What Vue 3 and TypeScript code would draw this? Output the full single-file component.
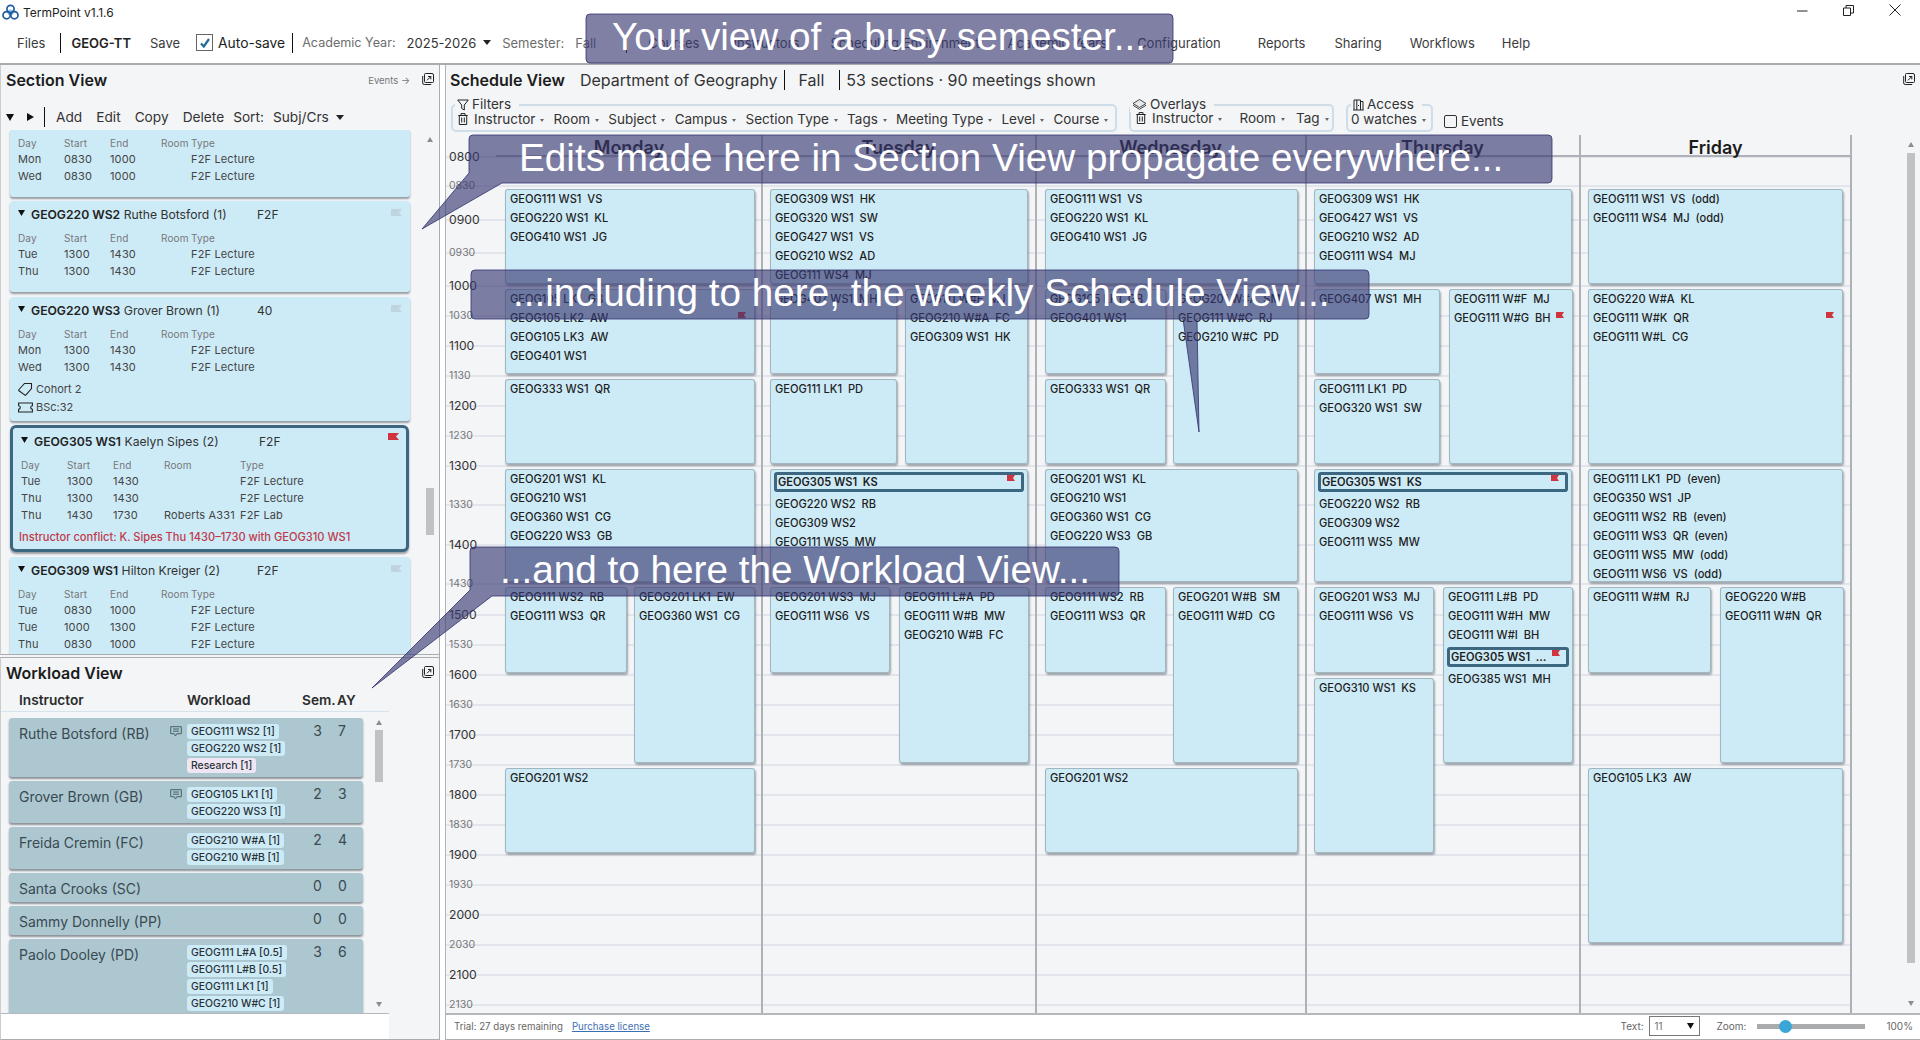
<script setup lang="ts">
interface Mtg { d: string; s: string; e: string; room?: string; t: string }
interface Sec {
  code: string; name: string; mode: string; mtgs: Mtg[]; sel?: boolean; tags?: boolean; conflict?: string; first?: boolean
}
const F = 'F2F Lecture'
const sections: Sec[] = [
  { code: 'GEOG220 WS1', name: '', mode: '', first: true, mtgs: [
    { d: 'Mon', s: '0830', e: '1000', t: F }, { d: 'Wed', s: '0830', e: '1000', t: F }] },
  { code: 'GEOG220 WS2', name: 'Ruthe Botsford (1)', mode: 'F2F', mtgs: [
    { d: 'Tue', s: '1300', e: '1430', t: F }, { d: 'Thu', s: '1300', e: '1430', t: F }] },
  { code: 'GEOG220 WS3', name: 'Grover Brown (1)', mode: '40', tags: true, mtgs: [
    { d: 'Mon', s: '1300', e: '1430', t: F }, { d: 'Wed', s: '1300', e: '1430', t: F }] },
  { code: 'GEOG305 WS1', name: 'Kaelyn Sipes (2)', mode: 'F2F', sel: true,
    conflict: 'Instructor conflict: K. Sipes Thu 1430–1730 with GEOG310 WS1', mtgs: [
      { d: 'Tue', s: '1300', e: '1430', t: F }, { d: 'Thu', s: '1300', e: '1430', t: F },
      { d: 'Thu', s: '1430', e: '1730', room: 'Roberts A331', t: 'F2F Lab' }] },
  { code: 'GEOG309 WS1', name: 'Hilton Kreiger (2)', mode: 'F2F', mtgs: [
    { d: 'Tue', s: '0830', e: '1000', t: F }, { d: 'Tue', s: '1000', e: '1300', t: F },
    { d: 'Thu', s: '0830', e: '1000', t: F }] }
]

interface Wl { name: string; note?: boolean; chips: string[]; sem: number; ay: number }
const workload: Wl[] = [
  { name: 'Ruthe Botsford (RB)', note: true, chips: ['GEOG111 WS2 [1]', 'GEOG220 WS2 [1]', 'Research [1]'], sem: 3, ay: 7 },
  { name: 'Grover Brown (GB)', note: true, chips: ['GEOG105 LK1 [1]', 'GEOG220 WS3 [1]'], sem: 2, ay: 3 },
  { name: 'Freida Cremin (FC)', chips: ['GEOG210 W#A [1]', 'GEOG210 W#B [1]'], sem: 2, ay: 4 },
  { name: 'Santa Crooks (SC)', chips: [], sem: 0, ay: 0 },
  { name: 'Sammy Donnelly (PP)', chips: [], sem: 0, ay: 0 },
  { name: 'Paolo Dooley (PD)', chips: ['GEOG111 L#A [0.5]', 'GEOG111 L#B [0.5]', 'GEOG111 LK1 [1]', 'GEOG210 W#C [1]'], sem: 3, ay: 6 }
]

const menuLeft = [
  { t: 'Courses', ml: 21 }, { t: 'Instructors', ml: 34 }, { t: 'Scheduling Environment', ml: 31 },
  { t: 'Academic Years', ml: 28 }, { t: 'Configuration', ml: 30 }, { t: 'Reports', ml: 37 },
  { t: 'Sharing', ml: 29 }, { t: 'Workflows', ml: 28 }, { t: 'Help', ml: 27 }
]
const filters = ['Instructor', 'Room', 'Subject', 'Campus', 'Section Type', 'Tags', 'Meeting Type', 'Level', 'Course']

const bounds = [157, 186, 220, 253, 286, 316, 346, 376, 406, 436, 466, 505, 545, 584, 615, 645, 675, 705, 735, 765, 795, 825, 855, 885, 915, 945, 975, 1005, 1013]
const rowsCss = '22px ' + bounds.slice(1).map((b, i) => `${b - bounds[i]}px`).join(' ')
const slots = bounds.slice(0, -1).map((_, i) => {
  const h = 8 + Math.floor(i / 2)
  return { i, label: `${String(h).padStart(2, '0')}${i % 2 ? '30' : '00'}`, half: i % 2 === 1 }
})
const days = ['Monday', 'Tuesday', 'Wednesday', 'Thursday', 'Friday']

interface Line { t: string; sel?: boolean; flag?: boolean }
interface Block { day: number; a: number; b: number; ml: number; mr: number; lines: (string | Line)[] }
const S: Line = { t: 'GEOG305 WS1  KS', sel: true, flag: true }
const blocks: Block[] = [
  { day: 0, a: 1, b: 4, ml: 8, mr: 7, lines: ['GEOG111 WS1  VS', 'GEOG220 WS1  KL', 'GEOG410 WS1  JG'] },
  { day: 0, a: 4, b: 7, ml: 8, mr: 7, lines: ['GEOG105 LK1  GB', { t: 'GEOG105 LK2  AW', flag: true }, 'GEOG105 LK3  AW', 'GEOG401 WS1'] },
  { day: 0, a: 7, b: 10, ml: 8, mr: 7, lines: ['GEOG333 WS1  QR'] },
  { day: 0, a: 10, b: 13, ml: 8, mr: 7, lines: ['GEOG201 WS1  KL', 'GEOG210 WS1', 'GEOG360 WS1  CG', 'GEOG220 WS3  GB'] },
  { day: 0, a: 13, b: 16, ml: 8, mr: 135, lines: ['GEOG111 WS2  RB', 'GEOG111 WS3  QR'] },
  { day: 0, a: 13, b: 19, ml: 137, mr: 7, lines: ['GEOG201 LK1  EW', 'GEOG360 WS1  CG'] },
  { day: 0, a: 19, b: 22, ml: 8, mr: 7, lines: ['GEOG201 WS2'] },

  { day: 1, a: 1, b: 4, ml: 8, mr: 8, lines: ['GEOG309 WS1  HK', 'GEOG320 WS1  SW', 'GEOG427 WS1  VS', 'GEOG210 WS2  AD', 'GEOG111 WS4  MJ'] },
  { day: 1, a: 4, b: 7, ml: 8, mr: 139, lines: ['GEOG407 WS1  MH'] },
  { day: 1, a: 4, b: 10, ml: 143, mr: 8, lines: ['GEOG111 W#F  MJ', 'GEOG210 W#A  FC', 'GEOG309 WS1  HK'] },
  { day: 1, a: 7, b: 10, ml: 8, mr: 139, lines: ['GEOG111 LK1  PD'] },
  { day: 1, a: 10, b: 13, ml: 8, mr: 8, lines: [S, 'GEOG220 WS2  RB', 'GEOG309 WS2', 'GEOG111 WS5  MW'] },
  { day: 1, a: 13, b: 16, ml: 8, mr: 146, lines: ['GEOG201 WS3  MJ', 'GEOG111 WS6  VS'] },
  { day: 1, a: 13, b: 19, ml: 137, mr: 7, lines: ['GEOG111 L#A  PD', 'GEOG111 W#B  MW', 'GEOG210 W#B  FC'] },

  { day: 2, a: 1, b: 4, ml: 9, mr: 8, lines: ['GEOG111 WS1  VS', 'GEOG220 WS1  KL', 'GEOG410 WS1  JG'] },
  { day: 2, a: 4, b: 7, ml: 9, mr: 140, lines: ['GEOG105 LK1  GB', 'GEOG401 WS1'] },
  { day: 2, a: 4, b: 10, ml: 137, mr: 8, lines: ['GEOG201 W#A  SM', 'GEOG111 W#C  RJ', 'GEOG210 W#C  PD'] },
  { day: 2, a: 7, b: 10, ml: 9, mr: 140, lines: ['GEOG333 WS1  QR'] },
  { day: 2, a: 10, b: 13, ml: 9, mr: 8, lines: ['GEOG201 WS1  KL', 'GEOG210 WS1', 'GEOG360 WS1  CG', 'GEOG220 WS3  GB'] },
  { day: 2, a: 13, b: 16, ml: 9, mr: 140, lines: ['GEOG111 WS2  RB', 'GEOG111 WS3  QR'] },
  { day: 2, a: 13, b: 19, ml: 137, mr: 8, lines: ['GEOG201 W#B  SM', 'GEOG111 W#D  CG'] },
  { day: 2, a: 19, b: 22, ml: 9, mr: 8, lines: ['GEOG201 WS2'] },

  { day: 3, a: 1, b: 4, ml: 8, mr: 8, lines: ['GEOG309 WS1  HK', 'GEOG427 WS1  VS', 'GEOG210 WS2  AD', 'GEOG111 WS4  MJ'] },
  { day: 3, a: 4, b: 7, ml: 8, mr: 140, lines: ['GEOG407 WS1  MH'] },
  { day: 3, a: 4, b: 10, ml: 143, mr: 7, lines: ['GEOG111 W#F  MJ', { t: 'GEOG111 W#G  BH', flag: true }] },
  { day: 3, a: 7, b: 10, ml: 8, mr: 140, lines: ['GEOG111 LK1  PD', 'GEOG320 WS1  SW'] },
  { day: 3, a: 10, b: 13, ml: 8, mr: 8, lines: [S, 'GEOG220 WS2  RB', 'GEOG309 WS2', 'GEOG111 WS5  MW'] },
  { day: 3, a: 13, b: 16, ml: 8, mr: 146, lines: ['GEOG201 WS3  MJ', 'GEOG111 WS6  VS'] },
  { day: 3, a: 13, b: 19, ml: 137, mr: 7, lines: ['GEOG111 L#B  PD', 'GEOG111 W#H  MW', 'GEOG111 W#I  BH', { t: 'GEOG305 WS1  …', sel: true, flag: true }, 'GEOG385 WS1  MH'] },
  { day: 3, a: 16, b: 22, ml: 8, mr: 146, lines: ['GEOG310 WS1  KS'] },

  { day: 4, a: 1, b: 4, ml: 8, mr: 9, lines: ['GEOG111 WS1  VS  (odd)', 'GEOG111 WS4  MJ  (odd)'] },
  { day: 4, a: 4, b: 10, ml: 8, mr: 9, lines: ['GEOG220 W#A  KL', { t: 'GEOG111 W#K  QR', flag: true }, 'GEOG111 W#L  CG'] },
  { day: 4, a: 10, b: 13, ml: 8, mr: 9, lines: ['GEOG111 LK1  PD  (even)', 'GEOG350 WS1  JP', 'GEOG111 WS2  RB  (even)', 'GEOG111 WS3  QR  (even)', 'GEOG111 WS5  MW  (odd)', 'GEOG111 WS6  VS  (odd)'] },
  { day: 4, a: 13, b: 16, ml: 8, mr: 141, lines: ['GEOG111 W#M  RJ'] },
  { day: 4, a: 13, b: 19, ml: 140, mr: 8, lines: ['GEOG220 W#B', 'GEOG111 W#N  QR'] },
  { day: 4, a: 19, b: 25, ml: 8, mr: 9, lines: ['GEOG105 LK3  AW'] }
]
const asLine = (l: string | Line): Line => (typeof l === 'string' ? { t: l } : l)
</script>

<template>
  <div class="app">
    <header class="titlebar">
      <svg class="logo" width="17" height="16" viewBox="0 0 17 16">
        <circle cx="8.5" cy="8.5" r="3" fill="#8cc6ec" />
        <g fill="none" stroke="#1f5e9c" stroke-width="1.7">
          <circle cx="8.5" cy="5" r="3.6" />
          <circle cx="4.6" cy="11.2" r="3.6" />
          <circle cx="12.4" cy="11.2" r="3.6" />
        </g>
      </svg>
      <span class="apptitle">TermPoint v1.1.6</span>
      <div class="winctl">
        <svg width="11" height="11" viewBox="0 0 11 11"><path d="M0 6h10.5" stroke="#222" fill="none" /></svg>
        <svg width="11" height="11" viewBox="0 0 11 11"><path d="M.5 3h7v7.5h-7zM3 3V.5h7.5v7.5H7.5" stroke="#222" fill="none" /></svg>
        <svg width="12" height="12" viewBox="0 0 12 12"><path d="M.5.5l11 11M11.5.5l-11 11" stroke="#222" fill="none" /></svg>
      </div>
    </header>

    <nav class="menubar">
      <span class="mi">Files</span>
      <i class="vsep s1"></i>
      <b class="mi proj">GEOG-TT</b>
      <span class="mi save">Save</span>
      <span class="chk">
        <svg width="12" height="12" viewBox="0 0 12 12"><path d="M2 6.5l2.8 3L10 2" fill="none" stroke="#1f6d96" stroke-width="2.2" /></svg>
      </span>
      <span class="mi auto">Auto-save</span>
      <i class="vsep s2"></i>
      <span class="mi muted ay">Academic Year:</span>
      <span class="mi yr">2025-2026</span>
      <i class="caret dark"></i>
      <span class="mi muted sem">Semester:</span>
      <span class="mi muted fall">Fall</span>
      <i class="vsep s3"></i>
      <span v-for="m in menuLeft" :key="m.t" class="mi" :style="{ marginLeft: m.ml + 'px' }">{{ m.t }}</span>
    </nav>

    <main class="main">
      <aside class="left">
        <section class="secpanel">
          <div class="phead secp">
            <h2>Section View</h2>
            <span class="events">Events →</span>
            <svg class="pop" width="12" height="12" viewBox="0 0 12 12" fill="none" stroke="#222">
              <path d="M2.5 1.5a1 1 0 0 1 1-1h6.5a1.5 1.5 0 0 1 1.5 1.5v6.5a1 1 0 0 1-1 1h-7a1 1 0 0 1-1-1z" />
              <path d="M.7 3v7a1.5 1.5 0 0 0 1.5 1.5h7" />
              <path d="M5 7.3l3.8-3.8M6 3.5h2.8v2.8" />
            </svg>
          </div>
          <div class="sectools">
            <svg width="8" height="7" viewBox="0 0 8 7"><path d="M0 0h8L4 7z" fill="#111" /></svg>
            <svg class="t2" width="7" height="8" viewBox="0 0 7 8"><path d="M0 0l7 4-7 4z" fill="#111" /></svg>
            <i class="vsep t3"></i>
            <span class="ti add">Add</span>
            <span class="ti">Edit</span>
            <span class="ti">Copy</span>
            <span class="ti">Delete</span>
            <span class="ti sort">Sort:</span>
            <span class="ti subj">Subj/Crs</span>
            <i class="caret dark c2"></i>
          </div>
          <div class="seclist">
            <article v-for="s in sections" :key="s.code" class="scard" :class="{ first: s.first, sel: s.sel, tagged: s.tags }">
              <div v-if="!s.first" class="stitle">
                <svg class="tri" width="7" height="6" viewBox="0 0 7 6"><path d="M0 0h7L3.5 6z" fill="#111" /></svg>
                <span class="shead"><b>{{ s.code }}</b>&nbsp;<span>{{ s.name }}</span></span>
                <span class="smode">{{ s.mode }}</span>
                <svg class="flag" width="11" height="7" viewBox="0 0 11 7"><path d="M0 0h11L8 3.5 11 7H0z" /></svg>
              </div>
              <div class="mrow mh">
                <span>Day</span><span>Start</span><span>End</span><span>Room</span><span>Type</span>
              </div>
              <div v-for="(m, i) in s.mtgs" :key="i" class="mrow">
                <span>{{ m.d }}</span><span>{{ m.s }}</span><span>{{ m.e }}</span><span>{{ m.room }}</span><span>{{ m.t }}</span>
              </div>
              <div v-if="s.tags" class="tags">
                <div class="tagrow">
                  <svg width="15" height="14" viewBox="0 0 15 14" fill="none" stroke="#222" stroke-width="1.1"><path d="M1 7.5L6.5 1.5h7v5L8 12.8a1 1 0 0 1-1.4 0L1 8.8a1 1 0 0 1 0-1.3z" /></svg>
                  <span>Cohort 2</span>
                </div>
                <div class="tagrow">
                  <svg width="15" height="11" viewBox="0 0 15 11" fill="none" stroke="#222" stroke-width="1.1"><path d="M.6 1h13.8v2.8a1.7 1.7 0 0 0 0 3.4V10H.6V7.2a1.7 1.7 0 0 0 0-3.4z" /></svg>
                  <span>BSc:32</span>
                </div>
              </div>
              <div v-if="s.conflict" class="conflict">{{ s.conflict }}</div>
            </article>
            <div class="sb secsb"><i class="up"></i><i class="thumb"></i></div>
          </div>
        </section>

        <section class="wlpanel">
          <div class="phead wl">
            <h2>Workload View</h2>
            <svg class="pop" width="12" height="12" viewBox="0 0 12 12" fill="none" stroke="#222">
              <path d="M2.5 1.5a1 1 0 0 1 1-1h6.5a1.5 1.5 0 0 1 1.5 1.5v6.5a1 1 0 0 1-1 1h-7a1 1 0 0 1-1-1z" />
              <path d="M.7 3v7a1.5 1.5 0 0 0 1.5 1.5h7" />
              <path d="M5 7.3l3.8-3.8M6 3.5h2.8v2.8" />
            </svg>
          </div>
          <div class="wlhead">
            <span class="h1">Instructor</span><span class="h2w">Workload</span><span class="h3">Sem.</span><span class="h4">AY</span>
          </div>
          <div class="wllist">
            <div class="wlrows">
              <div v-for="w in workload" :key="w.name" class="wlrow">
                <span class="wname">{{ w.name }}</span>
                <span class="wnote">
                  <svg v-if="w.note" width="12" height="11" viewBox="0 0 12 11" fill="none" stroke="#44606c" stroke-width="1"><path d="M.7.7h10.6v7H6.8L5.5 10 4.2 7.7H.7zM3 3h6M3 5.2h6" /></svg>
                </span>
                <span class="wchips">
                  <span v-for="c in w.chips" :key="c" class="chip" :class="{ res: c.startsWith('Research') }">{{ c }}</span>
                </span>
                <span class="wn sem">{{ w.sem }}</span>
                <span class="wn ayn">{{ w.ay }}</span>
              </div>
            </div>
            <div class="sb wlsb"><i class="up"></i><i class="thumb"></i><i class="dn"></i></div>
          </div>
          <div class="wlfoot"></div>
        </section>
      </aside>

      <section class="right">
        <div class="phead sch">
          <h2>Schedule View</h2>
          <span class="st dept">Department of Geography</span>
          <i class="vsep"></i>
          <span class="st sfall">Fall</span>
          <i class="vsep v2"></i>
          <span class="st count">53 sections · 90 meetings shown</span>
          <svg class="pop" width="12" height="12" viewBox="0 0 12 12" fill="none" stroke="#222">
            <path d="M2.5 1.5a1 1 0 0 1 1-1h6.5a1.5 1.5 0 0 1 1.5 1.5v6.5a1 1 0 0 1-1 1h-7a1 1 0 0 1-1-1z" />
            <path d="M.7 3v7a1.5 1.5 0 0 0 1.5 1.5h7" />
            <path d="M5 7.3l3.8-3.8M6 3.5h2.8v2.8" />
          </svg>
        </div>

        <div class="filters">
          <fieldset class="grp fgrp">
            <legend>
              <svg width="12" height="12" viewBox="0 0 12 12" fill="none" stroke="#222"><path d="M.7 1h10.6L7.3 6v5L4.7 9.4V6z" /></svg>
              Filters
            </legend>
            <div class="frow">
              <svg class="trash" width="10" height="12" viewBox="0 0 10 12" fill="none" stroke="#222"><path d="M.3 2.5h9.4M3 2.5V.6h4v1.9M1.3 2.5v9h7.4v-9M3.7 4.5v5M6.3 4.5v5" /></svg>
              <span v-for="f in filters" :key="f" class="fi">{{ f }}<i class="caret small"></i></span>
            </div>
          </fieldset>
          <fieldset class="grp ogrp">
            <legend>
              <svg width="15" height="11" viewBox="0 0 15 11" fill="#e6e8ea" stroke="#444"><path d="M7.5.5l6.5 4-6.5 4-6.5-4z" /><path d="M1 6.3l6.5 4 6.5-4" fill="none" /></svg>
              Overlays
            </legend>
            <div class="frow">
              <svg class="trash" width="10" height="12" viewBox="0 0 10 12" fill="none" stroke="#222"><path d="M.3 2.5h9.4M3 2.5V.6h4v1.9M1.3 2.5v9h7.4v-9M3.7 4.5v5M6.3 4.5v5" /></svg>
              <span class="fi oi">Instructor<i class="caret small"></i></span>
              <span class="fi oi orm">Room<i class="caret small"></i></span>
              <span class="fi oi">Tag<i class="caret small"></i></span>
            </div>
          </fieldset>
          <fieldset class="grp agrp">
            <legend>
              <svg width="11" height="12" viewBox="0 0 11 12" fill="none" stroke="#222"><path d="M1 11V1h6.5v10M.2 11h10.5M7.5 2.5H10V11M3.8 1v10M5.5 6v1" /></svg>
              Access
            </legend>
            <div class="frow"><span class="fi">0 watches<i class="caret small"></i></span></div>
          </fieldset>
          <label class="evts"><i class="evbox"></i>Events</label>
        </div>

        <div class="cal">
          <div class="grid" :style="{ gridTemplateRows: rowsCss }">
            <div v-for="s in slots" :key="s.i" class="slot" :style="{ gridRow: s.i + 2 }">
              <span class="tlabel" :class="{ half: s.half }">{{ s.label }}</span>
            </div>
            <template v-for="(d, i) in days" :key="'v' + d">
              <div v-if="i > 0" class="vline" :class="{ last: i === 4 }" :style="{ gridColumn: i + 2 }"></div>
            </template>
            <div v-for="(d, i) in days" :key="d" class="dayhead" :style="{ gridColumn: i + 2 }">{{ d }}</div>
            <div
              v-for="(b, i) in blocks"
              :key="i"
              class="block"
              :style="{ gridColumn: b.day + 2, gridRow: `${b.a + 2} / ${b.b + 2}`, marginLeft: b.ml + 'px', marginRight: b.mr + 'px' }"
            >
              <div
                v-for="(l, j) in b.lines.map(asLine)"
                :key="j"
                class="bl"
                :class="{ bsel: l.sel }"
              >{{ l.t }}<svg v-if="l.flag" class="bflag" width="8" height="6" viewBox="0 0 8 6"><path d="M0 0h8L6 3l2 3H0z" /></svg></div>
            </div>
          </div>
          <div class="sb calsb"><i class="up"></i><i class="thumb"></i><i class="dn"></i></div>
        </div>

        <footer class="status">
          <span class="trial">Trial: 27 days remaining</span>
          <a class="lic">Purchase license</a>
          <span class="stext tx">Text:</span>
          <span class="sel11">11<svg width="7" height="6" viewBox="0 0 7 6"><path d="M0 0h7L3.5 6z" fill="#111" /></svg></span>
          <span class="stext zl">Zoom:</span>
          <span class="slider"><i></i></span>
          <span class="stext pct">100%</span>
        </footer>
      </section>
    </main>

    <svg class="balloons" width="1920" height="1040" viewBox="0 0 1920 1040">
      <path d="M590 14H1169a4 4 0 0 1 4 4V59a4 4 0 0 1-4 4H590a4 4 0 0 1-4-4V18a4 4 0 0 1 4-4z" />
      <path d="M473 135H1548a4 4 0 0 1 4 4V179a4 4 0 0 1-4 4H502L422 229 469 173V139a4 4 0 0 1 4-4z" />
      <path d="M475 270H1365a4 4 0 0 1 4 4V315a4 4 0 0 1-4 4H1197L1199 432 1183 319H475a4 4 0 0 1-4-4V274a4 4 0 0 1 4-4z" />
      <path d="M474 547H1115a4 4 0 0 1 4 4V592a4 4 0 0 1-4 4H492L372 688 470 590V551a4 4 0 0 1 4-4z" />
    </svg>
    <div class="btext b1">Your view of a busy semester...</div>
    <div class="btext b2">Edits made here in Section View propagate everywhere...</div>
    <div class="btext b3">...including to here, the weekly Schedule View...</div>
    <div class="btext b4">...and to here the Workload View...</div>
  </div>
</template>

<style>
html, body { margin: 0; padding: 0; background: #fff; overflow: hidden; }
</style>

<style scoped>
.app {
  position: relative;
  width: 1920px;
  height: 1040px;
  overflow: hidden;
  background: #fff;
  font-family: Inter, "Noto Sans", sans-serif;
  color: #222;
  display: flex;
  flex-direction: column;
}
.titlebar { height: 24px; display: flex; align-items: center; padding-left: 2px; box-sizing: border-box; }
.apptitle { font-size: 12px; margin-left: 4px; color: #222; }
.winctl { margin-left: auto; display: flex; align-items: center; gap: 35px; padding: 0 19px 4px 0; }
.winctl svg { display: block; }
.menubar {
  height: 41px;
  box-sizing: border-box;
  display: flex;
  align-items: center;
  padding: 0 0 2px 17px;
  border-bottom: 2px solid #a9abad;
  font-size: 13px;
  color: #3c3c3c;
}
.mi { white-space: nowrap; }
.vsep { display: block; width: 1px; height: 20px; background: #111; flex: none; }
.vsep.s1 { margin-left: 15px; }
.proj { margin-left: 10px; font-weight: 600; color: #222; }
.save { margin-left: 19px; }
.chk {
  margin-left: 16px;
  width: 17px;
  height: 17px;
  box-sizing: border-box;
  border: 1px solid #666;
  display: flex;
  align-items: center;
  justify-content: center;
}
.auto { margin-left: 5px; color: #222; font-size: 13.8px; }
.vsep.s2 { margin-left: 7px; }
.muted { color: #6d6d6d; }
.ay { margin-left: 9px; font-size: 12.6px; }
.yr { margin-left: 11px; color: #333; }
.caret { display: inline-block; width: 0; height: 0; border-style: solid; border-color: #222 transparent transparent; }
.caret.dark { border-width: 5px 4px 0; margin-left: 7px; }
.sem { margin-left: 11px; }
.fall { margin-left: 11px; }
.vsep.s3 { margin-left: 30px; }
.caret.small { border-width: 3px 2.5px 0; border-top-color: #666; margin-left: 5px; vertical-align: 2px; }

.main { flex: 1; min-height: 0; display: flex; }
.left {
  width: 440px;
  flex: none;
  display: flex;
  flex-direction: column;
  background: #f3f5f7;
  border-right: 1px solid #a9adb1;
  box-sizing: border-box;
}
.right {
  margin-left: 5px;
  flex: 1;
  min-width: 0;
  background: #f3f5f7;
  border-left: 1px solid #b0b4b8;
  display: flex;
  flex-direction: column;
}
.phead { height: 30px; display: flex; align-items: center; padding: 0 5px 0 6px; flex: none; }
.phead.secp { padding-left: 5px; }
h2 { margin: 0; font-size: 16px; font-weight: 600; color: #1c1c1c; }
.events { margin-left: auto; font-size: 9.5px; color: #777; }
.pop { margin: 0 0 3px 12px; flex: none; }
.secpanel { height: 590px; display: flex; flex-direction: column; border-bottom: 1px solid #a9adb1; box-sizing: border-box; border-left: 1px solid #ccc; }
.sectools {
  height: 35px;
  flex: none;
  box-sizing: border-box;
  padding: 9px 0 0 5px;
  display: flex;
  align-items: center;
  font-size: 13.7px;
  color: #333;
}
.t2 { margin-left: 13px; }
.vsep.t3 { margin-left: 10px; }
.ti { margin-left: 14px; }
.ti.add { margin-left: 11px; }
.ti.sort { margin-left: 9px; }
.ti.subj { margin-left: 9px; }
.c2 { margin-left: 10px; }

.seclist { flex: 1; min-height: 0; overflow: hidden; position: relative; padding-left: 9px; }
.scard {
  position: relative;
  width: 400px;
  box-sizing: border-box;
  background: #cdebf7;
  border-radius: 3px;
  margin-bottom: 5px;
  padding: 5px 8px 12px;
  box-shadow: 0 2px 2px rgba(40, 50, 60, .45);
}
.scard.first { padding-top: 6px; margin-bottom: 4px; border-radius: 0 0 3px 3px; }
.scard.tagged { padding-bottom: 6px; }
.scard.sel {
  width: 399px;
  border: 3px solid #3d6680;
  border-radius: 6px;
  margin-top: -1px;
  padding-bottom: 4px;
}
.stitle { display: flex; align-items: center; height: 16px; margin-bottom: 9px; font-size: 12px; }
.tri { margin: -3px 6px 0 0; flex: none; }
.shead { width: 226px; white-space: nowrap; color: #333; font-size: 12.2px; }
.shead b { font-weight: 600; color: #222; }
.sel .shead { width: 225px; }
.smode { color: #333; }
.flag { position: absolute; right: 8px; top: 8px; fill: #bed5df; }
.sel .flag { fill: #d1343f; right: 7px; top: 5px; }
.mrow {
  display: grid;
  grid-template-columns: 46px 46px 51px 30px 1fr;
  font-size: 11px;
  line-height: 17px;
  color: #444;
  white-space: nowrap;
  letter-spacing: .15px;
}
.sel .mrow { grid-template-columns: 46px 46px 51px 76px 1fr; }
.mrow.mh { font-size: 10px; line-height: 15px; color: #777; }
.tags { margin-top: 5px; font-size: 11px; color: #444; display: flex; flex-direction: column; gap: 2px; }
.tagrow { display: flex; align-items: center; height: 16px; gap: 3px; }
.tagrow svg { flex: none; }
.conflict { margin: 5px 0 0 -2px; line-height: 16px; font-size: 11.1px; font-weight: 500; color: #c0394a; white-space: nowrap; }

.sb { position: absolute; width: 9px; }
.sb i { position: absolute; display: block; }
.sb .up { left: 1px; width: 0; height: 0; border-style: solid; border-width: 0 3.5px 5px; border-color: transparent transparent #8d8d8d; }
.sb .dn { left: 1px; width: 0; height: 0; border-style: solid; border-width: 5px 3.5px 0; border-color: #8d8d8d transparent transparent; }
.sb .thumb { left: 0; width: 8px; background: #c0c1c4; }
.secsb { left: 425px; top: 0; bottom: 0; }
.secsb .up { top: 7px; }
.secsb .thumb { top: 358px; height: 47px; }

.wlpanel { flex: 1; min-height: 0; margin-top: 2px; display: flex; flex-direction: column; border-top: 1px solid #a9adb1; border-left: 1px solid #ccc; border-bottom: 1px solid #a9adb1; }
.phead.wl { height: 30px; padding-left: 5px; }
.phead.wl .pop { margin-left: auto; }
.wlhead {
  position: relative;
  width: 388px;
  height: 24px;
  flex: none;
  font-size: 13.7px;
  font-weight: 600;
  color: #2c2c2c;
  border-bottom: 1px solid #d5e3ec;
  box-sizing: border-box;
  display: flex;
  align-items: center;
}
.h1 { margin-left: 18px; width: 168px; }
.h2w { width: 115px; }
.h3 { width: 35px; }
.wllist { flex: none; height: 301px; width: 388px; position: relative; overflow: hidden; padding: 6px 0 0 8px; box-sizing: border-box; }
.wlrows { display: flex; flex-direction: column; gap: 4px; width: 354px; }
.wlrow {
  display: grid;
  grid-template-columns: 10px 151px 17px 115px 29px 1fr;
  background: #acc7d0;
  border-radius: 3px;
  box-shadow: 0 2px 2px rgba(40, 50, 60, .5);
  padding: 6px 0 4px;
  flex: none;
  color: #3a4a50;
}
.wname { grid-column: 2; font-size: 14px; line-height: 19px; white-space: nowrap; }
.wnote { grid-column: 3; display: flex; padding-top: 2px; }
.wchips { grid-column: 4; display: flex; flex-direction: column; align-items: flex-start; gap: 2px; }
.chip {
  font-size: 10.4px;
  font-weight: 500;
  line-height: 15px;
  height: 15px;
  padding: 0 4px;
  background: #cdebf7;
  border-radius: 3px;
  color: #2a3136;
  white-space: nowrap;
}
.chip.res { background: #efe6f5; }
.wn { font-size: 14px; line-height: 16px; text-align: center; margin-top: -1px; }
.sem { grid-column: 5; }
.wn.sem { margin-left: 2px; }
.ayn { grid-column: 6; }
.wn.ayn { text-align: left; padding-left: 7px; }
.wlsb { left: 374px; top: 0; bottom: 0; }
.wlsb .up { top: 8px; }
.wlsb .thumb { top: 18px; height: 52px; }
.wlsb .dn { top: 290px; }
.wlfoot { flex: 1; width: 388px; background: #fff; border-top: 1px solid #b5b8bb; box-sizing: border-box; }

.phead.sch { padding-left: 4px; }
.st { font-size: 16px; color: #333; white-space: nowrap; }
.dept { margin-left: 15px; }
.phead.sch .vsep { margin-left: 7px; }
.phead.sch .vsep.v2 { margin-left: 15px; }
.sfall { margin-left: 13px; }
.count { margin-left: 6px; }
.phead.sch .pop { margin-left: auto; margin-right: 0; }
.filters { display: flex; align-items: flex-start; height: 38px; flex: none; margin-top: 2px; padding-left: 5px; font-size: 13.5px; color: #333; }
.grp {
  margin: 0;
  padding: 0 0 0 5px;
  border: 2px solid #cfdde8;
  border-radius: 5px;
  height: 35px;
  box-sizing: border-box;
  min-width: 0;
  flex: none;
}
legend { padding: 0 8px 0 2px; margin-left: -3px; line-height: 15px; display: flex; align-items: center; gap: 3px; color: #333; }
.frow { display: flex; align-items: center; height: 16px; white-space: nowrap; margin-top: -1px; }
.trash { margin-right: 6px; flex: none; }
.fi { margin-right: 9.2px; }
.fgrp { width: 666px; }
.ogrp { width: 205px; margin-left: 12px; }
.ogrp legend { margin-left: -6px; }
.ogrp .frow { margin-top: -2px; }
.ogrp .fi { margin-right: 17px; }
.ogrp .fi.orm { margin-right: 11px; }
.agrp { width: 87px; margin-left: 12px; padding-left: 3px; }
.agrp legend { margin-left: 0; }
.evts { display: flex; align-items: center; margin: 16px 0 0 11px; }
.evbox { display: block; width: 13px; height: 13px; box-sizing: border-box; border: 1px solid #333; border-radius: 2px; margin-right: 4px; }

.cal { flex: 1; min-height: 0; position: relative; }
.grid {
  display: grid;
  grid-template-columns: 51px 265px 274px 270px 274px 272px;
  width: 1406px;
  overflow: hidden;
  height: 100%;
}
.slot { grid-column: 1 / -1; border-top: 2px solid #e2e5eb; box-sizing: border-box; margin-top: -1px; }
.tlabel { display: block; height: 0; line-height: 0; margin-left: 3px; font-size: 12.2px; color: #333; position: relative; top: -1px; }
.tlabel.half { font-size: 10.5px; color: #777; }
.vline { grid-row: 1 / -1; border-left: 2px solid #aeb2b7; margin-left: -1px; }
.vline.last { border-right: 2px solid #aeb2b7; }
.dayhead {
  grid-row: 1;
  text-align: center;
  font-size: 18px;
  font-weight: 600;
  color: #1c1c1c;
  height: 22px;
  box-sizing: border-box;
  padding-top: 3px;
  line-height: 19px;
  border-bottom: 2px solid #aeb2b7;
  margin-left: -1px;
}
.block {
  background: #cdebf7;
  border-radius: 3px;
  margin-top: 3px;
  margin-bottom: 2px;
  box-sizing: border-box;
  box-shadow: inset 0 0 0 1px #a2b6c0, 1px 2px 2px rgba(40, 50, 60, .4);
  padding: .5px 0 0 5px;
  overflow: hidden;
  min-width: 0;
  z-index: 1;
}
.bl {
  position: relative;
  font-size: 11.1px;
  font-weight: 500;
  line-height: 19px;
  white-space: pre;
  color: #1e1e1e;
}
.bsel {
  margin: 2px 4px 3px -1px;
  height: 20px;
  box-sizing: border-box;
  border: 3px solid #3d6680;
  border-radius: 3px;
  padding-left: 1px;
  line-height: 14px;
  font-weight: 600;
}
.bflag { position: absolute; right: 9px; top: 3px; fill: #d1343f; }
.bsel .bflag { right: 6px; top: 0; }
.calsb { left: 1461px; top: 0; bottom: 0; }
.calsb .up { top: 7px; }
.calsb .thumb { top: 18px; height: 810px; }
.calsb .dn { top: 866px; }

.status {
  height: 27px;
  flex: none;
  box-sizing: border-box;
  background: #fff;
  border-top: 2px solid #b5b8bb;
  border-bottom: 1px solid #a9adb1;
  display: flex;
  align-items: center;
  font-size: 9.7px;
  color: #666;
  padding: 0 0 2px 8px;
}
.lic { margin-left: 9px; color: #3d6fb0; text-decoration: underline; }
.stext { white-space: nowrap; font-size: 10px; }
.stext.tx { margin-left: auto; }
.sel11 {
  margin-left: 5px;
  width: 51px;
  height: 20px;
  box-sizing: border-box;
  border: 1px solid #777;
  display: flex;
  align-items: center;
  justify-content: space-between;
  padding: 0 5px;
}
.stext.zl { margin-left: 17px; }
.slider { margin-left: 11px; width: 108px; height: 5px; background: #a9abad; position: relative; display: block; }
.slider i { position: absolute; left: 22px; top: -4px; width: 13px; height: 13px; border-radius: 50%; background: #3aa6d8; }
.stext.pct { margin-left: 21px; margin-right: 7px; }

.balloons { position: absolute; left: 0; top: 0; z-index: 10; pointer-events: none; }
.balloons path { fill: rgba(57, 56, 114, .64); stroke: rgba(50, 50, 110, .8); stroke-width: 1; }
.btext {
  position: absolute;
  z-index: 11;
  font-family: "Liberation Sans", Arial, sans-serif;
  font-size: 38.7px;
  line-height: 44px;
  color: #fff;
  white-space: nowrap;
  pointer-events: none;
}
.b1 { left: 612px; top: 15px; }
.b2 { left: 519px; top: 136px; }
.b3 { left: 513px; top: 271px; }
.b4 { left: 500px; top: 548px; }
</style>
